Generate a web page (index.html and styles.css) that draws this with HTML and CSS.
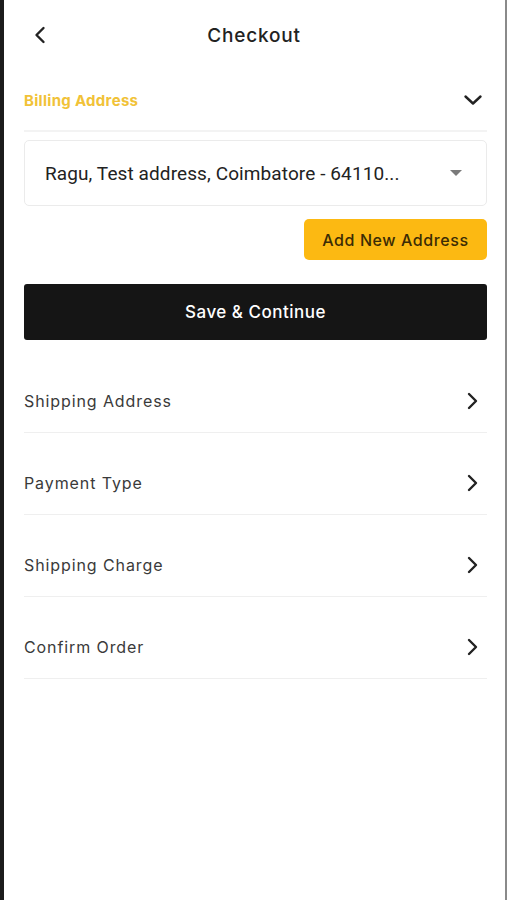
FILE: index.html
```html
<!DOCTYPE html>
<html lang="en">
<head>
<meta charset="utf-8">
<title>Checkout</title>
<link rel="stylesheet" href="styles.css">
</head>
<body>
<div class="phone">
  <header class="topbar">
    <span class="back">
      <svg width="14" height="18" viewBox="0 0 14 18"><path d="M10.5 2 L3.5 9 L10.5 16" fill="none" stroke="#222" stroke-width="2.4" stroke-linecap="round" stroke-linejoin="round"/></svg>
    </span>
    <h1 class="title">Checkout</h1>
    <span></span>
  </header>

  <main class="content">
    <div class="section-head">
      <span class="section-title">Billing Address</span>
      <svg class="chev-down" width="20" height="12" viewBox="0 0 20 12"><path d="M2.5 2.5 L10 9.5 L17.5 2.5" fill="none" stroke="#222" stroke-width="2.4" stroke-linecap="round" stroke-linejoin="round"/></svg>
    </div>

    <div class="select">
      <span class="select-text">Ragu, Test address, Coimbatore - 64110...</span>
      <span class="caret"></span>
    </div>

    <div class="add-row">
      <button class="btn-add">Add New Address</button>
    </div>

    <button class="btn-save">Save &amp; Continue</button>

    <ul class="steps">
      <li class="step"><span>Shipping Address</span><svg width="12" height="18" viewBox="0 0 12 18"><path d="M3 2 L10 9 L3 16" fill="none" stroke="#222" stroke-width="2.4" stroke-linecap="round" stroke-linejoin="round"/></svg></li>
      <li class="step"><span>Payment Type</span><svg width="12" height="18" viewBox="0 0 12 18"><path d="M3 2 L10 9 L3 16" fill="none" stroke="#222" stroke-width="2.4" stroke-linecap="round" stroke-linejoin="round"/></svg></li>
      <li class="step"><span>Shipping Charge</span><svg width="12" height="18" viewBox="0 0 12 18"><path d="M3 2 L10 9 L3 16" fill="none" stroke="#222" stroke-width="2.4" stroke-linecap="round" stroke-linejoin="round"/></svg></li>
      <li class="step"><span>Confirm Order</span><svg width="12" height="18" viewBox="0 0 12 18"><path d="M3 2 L10 9 L3 16" fill="none" stroke="#222" stroke-width="2.4" stroke-linecap="round" stroke-linejoin="round"/></svg></li>
    </ul>
  </main>
</div>
</body>
</html>
```

FILE: styles.css
```css
* { box-sizing: border-box; }
html, body { margin: 0; padding: 0; background: #fff; }
body { font-family: "Inter", "Noto Sans", sans-serif; color: #222; }

.phone {
  width: 507px;
  height: 900px;
  border-left: 4px solid #1c1c1c;
  border-right: 2px solid #8a8a8a;
  background: #fff;
  overflow: hidden;
}

.topbar {
  height: 70px;
  display: grid;
  grid-template-columns: 1fr auto 1fr;
  align-items: center;
  padding-left: 29px;
}
.back { display: flex; align-items: center; }
.title {
  margin: 0;
  font-size: 19px;
  font-weight: 500;
  color: #222;
  letter-spacing: 0.8px;
  transform: translateX(-15px);
}

.content { padding: 0 18px 0 20px; }

.section-head {
  height: 62px;
  display: flex;
  align-items: center;
  justify-content: space-between;
  border-bottom: 2px solid #f3f3f3;
  padding-right: 4px;
}
.section-title {
  font-size: 15px;
  font-weight: 700;
  color: #f1c237;
  letter-spacing: 0.3px;
}

.select {
  margin-top: 8px;
  height: 66px;
  border: 1px solid #ebebeb;
  border-radius: 5px;
  display: flex;
  align-items: center;
  justify-content: space-between;
  padding: 0 24px 0 20px;
}
.select-text {
  font-family: "Roboto", sans-serif;
  font-size: 19px;
  color: #222;
  letter-spacing: 0.1px;
}
.caret {
  width: 0; height: 0;
  border-left: 6px solid transparent;
  border-right: 6px solid transparent;
  border-top: 6px solid #7a7a7a;
}

.add-row { display: flex; justify-content: flex-end; margin-top: 13px; }
.btn-add {
  width: 183px;
  height: 41px;
  border: none;
  border-radius: 5px;
  background: #fcb912;
  color: #3b2c05;
  font-family: "Inter", sans-serif;
  font-size: 16px;
  font-weight: 500;
  letter-spacing: 0.6px;
  padding: 0;
}

.btn-save {
  display: block;
  width: 100%;
  margin-top: 24px;
  height: 56px;
  border: none;
  border-radius: 3px;
  background: #151515;
  color: #fff;
  font-family: "Inter", sans-serif;
  font-size: 17px;
  font-weight: 500;
  letter-spacing: 0.5px;
}

.steps { list-style: none; margin: 11px 0 0; padding: 0; }
.step {
  height: 82px;
  padding: 40px 9px 21px 0;
  border-bottom: 1px solid #efefef;
  display: flex;
  align-items: center;
  justify-content: space-between;
  font-size: 16px;
  color: #3a3a3a;
  line-height: 20px;
}
.step span { letter-spacing: 0.9px; }
.step svg { display: block; }
```
